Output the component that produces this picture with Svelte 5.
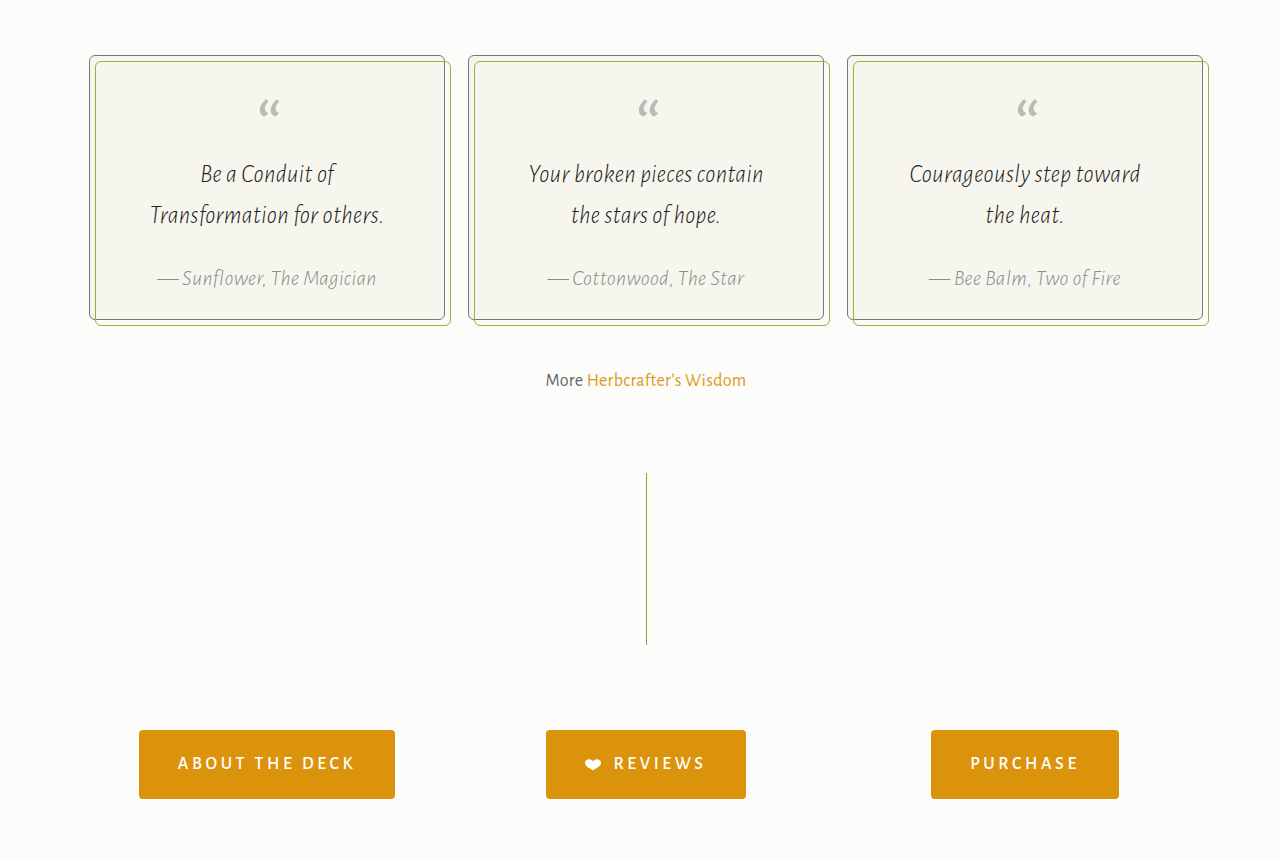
<script lang="ts">
	const quotes = [
		{ lines: ['Be a Conduit of', 'Transformation for others.'], source: 'Sunflower, The Magician' },
		{ lines: ['Your broken pieces contain', 'the stars of hope.'], source: 'Cottonwood, The Star' },
		{ lines: ['Courageously step toward', 'the heat.'], source: 'Bee Balm, Two of Fire' }
	];

	const actions = [
		{ label: 'About the Deck', href: '#about' },
		{ label: 'Reviews', href: '#reviews', heart: true },
		{ label: 'Purchase', href: '#purchase' }
	];
</script>

<main class="page">
	<section class="columns">
		{#each quotes as quote}
			<figure class="card">
				<div class="mark" aria-hidden="true">“</div>
				<blockquote>
					{#each quote.lines as line}
						<span class="line">{line}</span>
					{/each}
				</blockquote>
				<figcaption>— {quote.source}</figcaption>
			</figure>
		{/each}
	</section>

	<p class="more">More <a href="#wisdom">Herbcrafter’s Wisdom</a></p>

	<div class="divider"></div>

	<nav class="columns">
		{#each actions as action}
			<a class="button" href={action.href}>
				{#if action.heart}
					<svg class="heart" viewBox="0 0 16 12" aria-hidden="true">
						<path d="M8 11.500C6 9.500 0 7.800 0 4C0 1.500 1.800 0.300 4 0.300C5.800 0.300 7.300 1.200 8 2.500C8.700 1.200 10.200 0.300 12 0.300C14.200 0.300 16 1.500 16 4C16 7.800 10 9.500 8 11.500Z" />
					</svg>
				{/if}
				{action.label}
			</a>
		{/each}
	</nav>
</main>

<style>
	:global(body) {
		margin: 0;
		background: #fcfcfa;
	}

	.page {
		padding: 55px 77px 60px 89px;
		font-family: 'Alegreya Sans', Lato, sans-serif;
		letter-spacing: 0.02em;
		color: #666;
	}

	.columns {
		display: grid;
		grid-template-columns: repeat(3, 1fr);
		gap: 23px;
	}

	.card {
		position: relative;
		padding: 32px 24px 21px;
		margin: 0;
		border: 1px solid #777;
		border-radius: 6px;
		background: #f6f6ee;
		text-align: center;
		font-style: italic;
		font-weight: 300;
	}

	/* second outline, shifted down and to the right */
	.card::after {
		content: '';
		position: absolute;
		inset: 5px -7px -7px 5px;
		border: 1px solid #92b43c;
		border-radius: 6px;
		pointer-events: none;
	}

	.mark {
		height: 66px;
		color: #bbbbb5;
		font-size: 84px;
		line-height: 80px;
		font-weight: 400;
	}

	blockquote {
		margin: 0 0 22px;
		font-size: 25px;
		line-height: 41px;
		color: #222;
	}

	.line {
		display: block;
	}

	figcaption {
		font-size: 22px;
		line-height: 40px;
		color: #8c8c8a;
	}

	.more {
		margin: 46px 0 77px;
		font-size: 18px;
		line-height: 30px;
		text-align: center;
	}

	.more a {
		color: #e1991d;
		text-decoration: none;
	}

	.divider {
		width: 1px;
		height: 172px;
		margin: 0 auto 85px;
		background: #84a82a;
	}

	.button {
		display: flex;
		align-items: center;
		justify-self: center;
		padding: 20px 39px;
		border-radius: 4px;
		background: #dc930c;
		color: #fff;
		font-size: 18px;
		line-height: 29px;
		font-weight: 500;
		letter-spacing: 0.2em;
		text-transform: uppercase;
		text-decoration: none;
	}

	.heart {
		width: 16px;
		height: 12px;
		margin-right: 12px;
		fill: #fff;
	}
</style>
